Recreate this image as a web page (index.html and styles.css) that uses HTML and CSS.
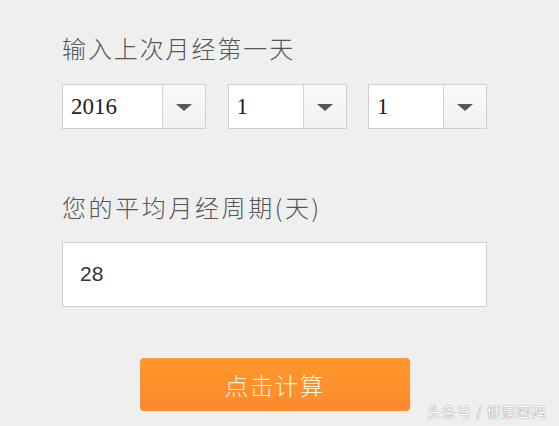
FILE: index.html
```html
<!DOCTYPE html>
<html lang="zh-CN">
<head>
    <meta charset="UTF-8">
    <meta name="viewport" content="width=device-width, initial-scale=1.0">
    <title>月经周期计算</title>
    <link rel="stylesheet" href="styles.css">
</head>
<body>
    <div class="container">
        <h2 class="title">输入上次月经第一天</h2>

        <div class="date-row">
            <div class="select select-year">
                <span class="select-value">2016</span>
                <span class="select-arrow"></span>
            </div>
            <div class="select">
                <span class="select-value">1</span>
                <span class="select-arrow"></span>
            </div>
            <div class="select">
                <span class="select-value">1</span>
                <span class="select-arrow"></span>
            </div>
        </div>

        <h2 class="title title-cycle">您的平均月经周期(天)</h2>

        <div class="cycle-input">28</div>

        <div class="actions">
            <button type="button">点击计算</button>
        </div>
    </div>

    <div class="watermark">头条号 / 健康密码</div>
</body>
</html>
```

FILE: styles.css
```css
* {
    margin: 0;
    padding: 0;
    box-sizing: border-box;
}

body {
    background: #efefef;
    font-family: "Noto Sans CJK SC", "Liberation Sans", sans-serif;
    width: 559px;
    height: 426px;
    overflow: hidden;
    position: relative;
}

.container {
    width: 425px;
    margin-left: 62px;
    padding-top: 34px;
}

.title {
    font-size: 24px;
    font-weight: 300;
    line-height: 28px;
    color: #555;
    letter-spacing: 1.9px;
}

.date-row {
    display: flex;
    justify-content: space-between;
    margin-top: 22px;
}

.select {
    display: flex;
    width: 119px;
    height: 45px;
    background: #fff;
    border: 1px solid #cfcfcf;
}

.select-year {
    width: 144px;
}

.select-value {
    flex: 1;
    padding-left: 8px;
    font-family: "Liberation Serif", serif;
    font-size: 23px;
    line-height: 43px;
    color: #222;
}

.select-arrow {
    width: 43px;
    border-left: 1px solid #d4d4d4;
    background: linear-gradient(#fafafa, #f0f0f0);
    display: flex;
    align-items: center;
    justify-content: center;
}

.select-arrow::after {
    content: "";
    border-left: 8px solid transparent;
    border-right: 8px solid transparent;
    border-top: 7px solid #575757;
    margin-top: 2px;
}

.title-cycle {
    margin-top: 64px;
    letter-spacing: 2.6px;
}

.cycle-input {
    margin-top: 21px;
    height: 65px;
    background: #fff;
    border: 1px solid #cfcfcf;
    padding-left: 17px;
    font-family: "Liberation Sans", sans-serif;
    font-size: 21px;
    line-height: 62px;
    color: #333;
}

.actions {
    display: flex;
    justify-content: center;
    margin-top: 51px;
}

button {
    width: 270px;
    height: 53px;
    border: none;
    border-radius: 4px;
    background: linear-gradient(#ff972c, #fb8a2e);
    color: #fff4dc;
    font-family: "Noto Sans CJK SC", sans-serif;
    font-size: 24px;
    font-weight: 300;
    letter-spacing: 1px;
    cursor: pointer;
}

.watermark {
    position: absolute;
    right: 12px;
    bottom: 5px;
    font-size: 14px;
    color: #fff;
    letter-spacing: 1px;
    text-shadow: 0 0 1px #888, 0 0 1px #999;
}
```
